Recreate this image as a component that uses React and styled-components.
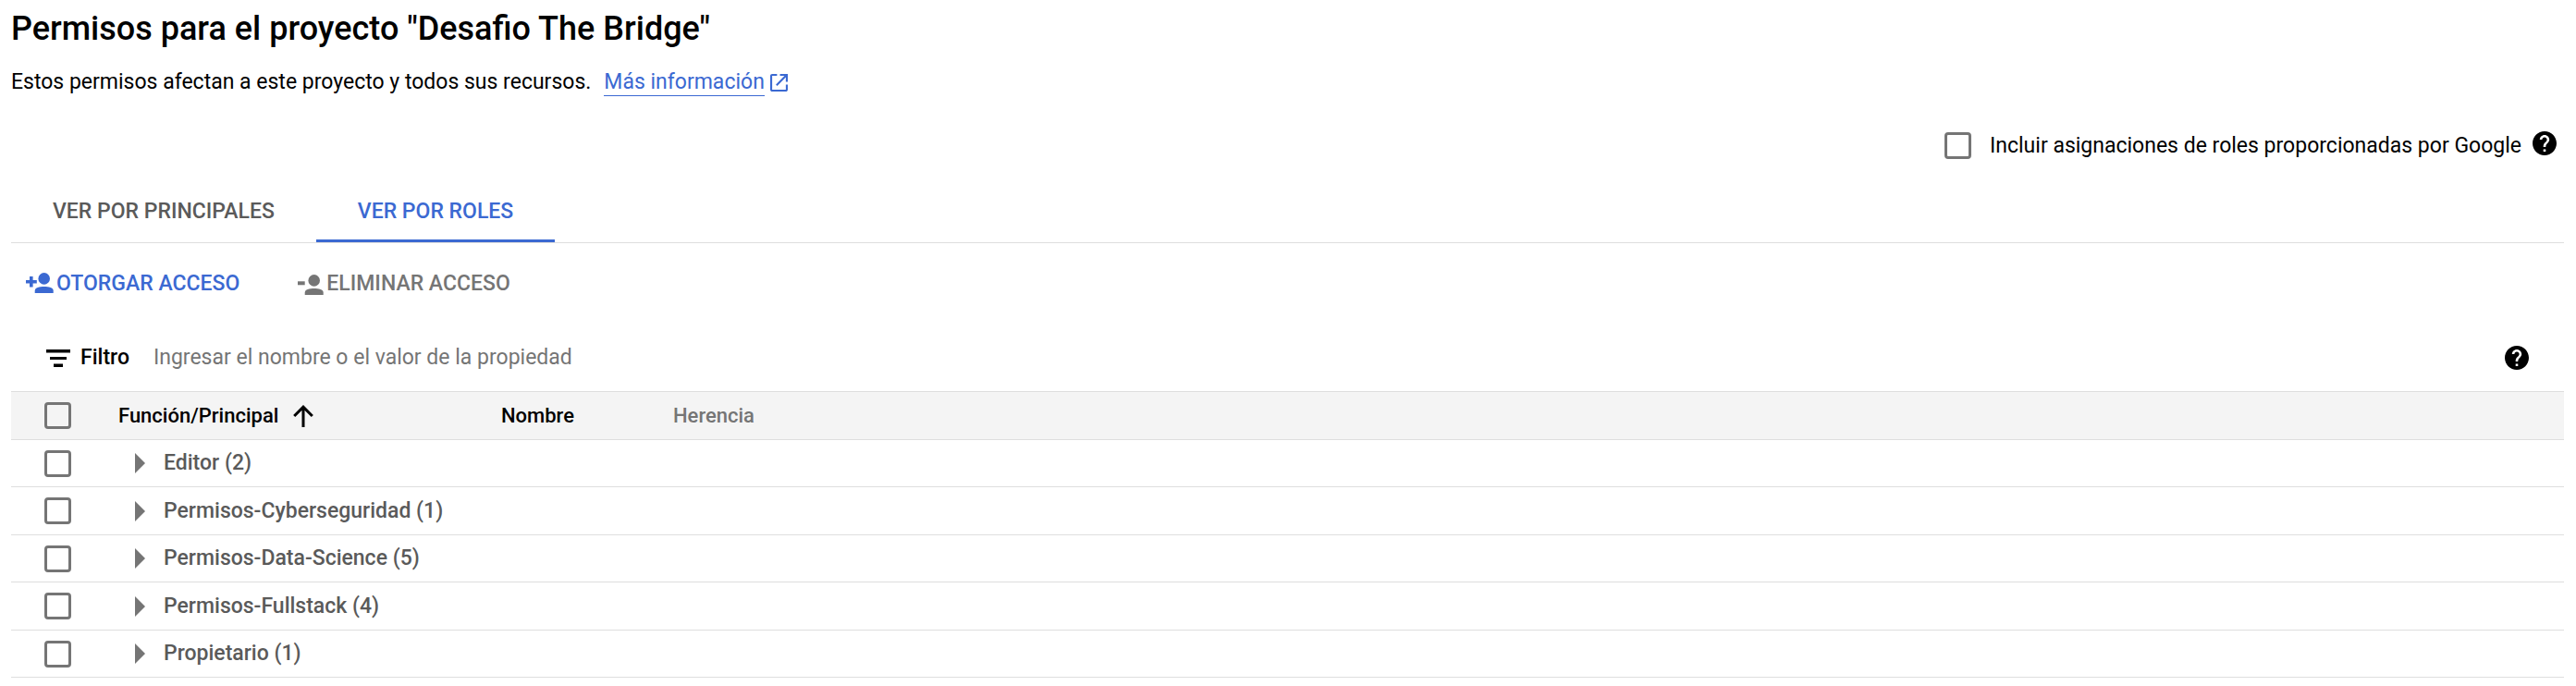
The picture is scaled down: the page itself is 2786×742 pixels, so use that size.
import React, { useState } from "react";
import styled, { createGlobalStyle, css } from "styled-components";

const color = {
  text: "#000000",
  muted: "#757575",
  strong: "#5a5a5a",
  accent: "#3b69d2",
  line: "#dedede",
  header: "#f4f4f4",
};

const GlobalStyle = createGlobalStyle`
  *, *::before, *::after { box-sizing: border-box; }
  body {
    margin: 0;
    background: #fff;
    color: ${color.text};
    font: 400 23px/28px Roboto, "Liberation Sans", sans-serif;
  }
  button, input { font: inherit; color: inherit; }
  svg { display: block; flex: none; }
`;

const Page = styled.main`
  padding: 10px 13px 9px 12px;
`;

const Title = styled.h1`
  margin: 0 0 23px;
  font-size: 36px;
  line-height: 42px;
  font-weight: 500;
`;

const Intro = styled.p`
  margin: 0;
  display: flex;
  gap: 14px;
`;

const MoreLink = styled.a`
  display: inline-flex;
  align-items: center;
  gap: 6px;
  color: ${color.accent};
  text-decoration: none;

  span {
    border-bottom: 1px solid ${color.accent};
  }
`;

const GoogleRoles = styled.div`
  display: flex;
  justify-content: flex-end;
  align-items: flex-start;
  gap: 12px;
  padding: 38px 8px 23px 0;
`;

const CheckLabel = styled.label`
  display: flex;
  align-items: center;
  gap: 20px;
  min-height: 31px;
`;

const Checkbox = styled.input.attrs({ type: "checkbox" })`
  appearance: none;
  display: block;
  flex: none;
  width: 29px;
  height: 29px;
  margin: 0;
  border: 3px solid ${color.muted};
  border-radius: 4px;
  cursor: pointer;

  &:checked {
    background: ${color.accent};
    border-color: ${color.accent};
  }
`;

const plainButton = css`
  border: 0;
  background: none;
  padding: 0;
  cursor: pointer;
`;

const HelpButton = styled.button`
  ${plainButton}
`;

const TabBar = styled.div`
  display: flex;
  border-bottom: 1px solid ${color.line};
`;

const Tab = styled.button`
  ${plainButton}
  height: 66px;
  padding: 0 45px;
  font-weight: 500;
  color: ${(p) => (p.$active ? color.accent : color.strong)};
  box-shadow: ${(p) => (p.$active ? `inset 0 -3px ${color.accent}` : "none")};
`;

const Toolbar = styled.div`
  display: flex;
  align-items: center;
  gap: 29px;
  height: 88px;
`;

const ToolButton = styled.button`
  ${plainButton}
  display: flex;
  align-items: center;
  gap: 3px;
  padding: 0 16px;
  font-weight: 500;
  color: ${color.accent};

  &:disabled {
    color: ${color.muted};
    cursor: default;
  }
`;

const FilterBar = styled.div`
  display: flex;
  align-items: center;
  height: 72px;
  padding: 0 38px;
`;

const FilterLabel = styled.label`
  display: flex;
  align-items: center;
  gap: 11px;
  font-weight: 500;
`;

const FilterInput = styled.input`
  flex: 1;
  min-width: 0;
  margin-left: 26px;
  padding: 0;
  border: 0;
  outline: 0;
  background: none;

  &::placeholder {
    color: ${color.muted};
    opacity: 1;
  }
`;

const Table = styled.table`
  width: 100%;
  table-layout: fixed;
  border-collapse: separate;
  border-spacing: 0;
  border-top: 1px solid ${color.line};
`;

const Col = styled.col`
  width: ${(p) => p.$width};
`;

const HeadCell = styled.th`
  height: 52px;
  padding: 0 0 0 12px;
  text-align: left;
  font-size: 22px;
  font-weight: 500;
  color: ${(p) => (p.$muted ? color.muted : color.text)};
  background: ${color.header};
  border-bottom: 1px solid ${color.line};
`;

const CheckHeadCell = styled(HeadCell)`
  padding-left: 36px;
`;

const SortButton = styled.button`
  ${plainButton}
  display: flex;
  align-items: center;
  gap: 16px;
`;

const Row = styled.tr`
  height: 51px;

  &:nth-child(even) {
    height: 52px;
  }
`;

const Cell = styled.td`
  padding: 0 0 0 30px;
  border-bottom: 1px solid ${color.line};
`;

const CheckCell = styled(Cell)`
  padding-left: 36px;
`;

const Expander = styled.button`
  ${plainButton}
  display: flex;
  align-items: center;
  gap: 20px;
  font-weight: 500;
  color: ${color.strong};
`;

const Triangle = () => (
  <svg width="11" height="22" viewBox="0 0 11 22" fill={color.muted} aria-hidden="true">
    <path d="M0 0l11 11L0 22z" />
  </svg>
);

const HelpIcon = () => (
  <svg width="26" height="26" viewBox="2 2 20 20" fill="currentColor" aria-hidden="true">
    <path d="M12 2C6.48 2 2 6.48 2 12s4.48 10 10 10 10-4.48 10-10S17.52 2 12 2zm1 17h-2v-2h2v2zm2.07-7.75l-.9.92C13.45 12.9 13 13.5 13 15h-2v-.5c0-1.1.45-2.1 1.17-2.83l1.24-1.26c.37-.36.59-.86.59-1.41 0-1.1-.9-2-2-2s-2 .9-2 2H8c0-2.21 1.79-4 4-4s4 1.79 4 4c0 .88-.36 1.68-.93 2.25z" />
  </svg>
);

const OpenIcon = () => (
  <svg width="19" height="19" viewBox="3 3 18 18" fill="currentColor" aria-hidden="true">
    <path d="M19 19H5V5h5V3H5c-1.11 0-2 .9-2 2v14c0 1.1.89 2 2 2h14c1.1 0 2-.9 2-2v-5h-2v5zM13 3v2h4.590l-8.830 8.830 1.410 1.410L19 6.410V11h2V3h-8z" />
  </svg>
);

const PersonIcon = ({ add }) => (
  <svg width="30" height="24" viewBox="0 0 30 24" fill="currentColor" aria-hidden="true">
    {add ? (
      <path d="M0 8h4V4h3.600v4h4.200v3.500H7.600v4H4v-4H0z" />
    ) : (
      <path d="M2 9.300h7.700v4H2z" />
    )}
    <g transform={add ? undefined : "translate(0 2)"}>
      <circle cx="19.700" cy="6.400" r="6.300" />
      <path d="M9.700 22v-2.500c0-3.500 5-4.500 10-4.500s10 1 10 4.500V22z" />
    </g>
  </svg>
);

const FilterIcon = () => (
  <svg width="26" height="19" viewBox="0 0 26 19" fill="currentColor" aria-hidden="true">
    <path d="M0 0h26v3.500H0zM4 8h18v3H4zM8 15.500h10V19H8z" />
  </svg>
);

const ArrowUpIcon = () => (
  <svg width="22" height="24" viewBox="0 0 22 24" fill="none" stroke="currentColor" strokeWidth="3" aria-hidden="true">
    <path d="M11 24V2.500M1.200 12L11 2.200 20.800 12" />
  </svg>
);

const roles = [
  { name: "Editor", count: 2 },
  { name: "Permisos-Cyberseguridad", count: 1 },
  { name: "Permisos-Data-Science", count: 5 },
  { name: "Permisos-Fullstack", count: 4 },
  { name: "Propietario", count: 1 },
];

const tabs = ["VER POR PRINCIPALES", "VER POR ROLES"];

export default function App() {
  const [active, setActive] = useState(1);

  return (
    <Page>
      <GlobalStyle />
      <Title>Permisos para el proyecto "Desafio The Bridge"</Title>
      <Intro>
        Estos permisos afectan a este proyecto y todos sus recursos.
        <MoreLink href="#info">
          <span>Más información</span>
          <OpenIcon />
        </MoreLink>
      </Intro>

      <GoogleRoles>
        <CheckLabel>
          <Checkbox />
          Incluir asignaciones de roles proporcionadas por Google
        </CheckLabel>
        <HelpButton aria-label="Ayuda">
          <HelpIcon />
        </HelpButton>
      </GoogleRoles>

      <TabBar role="tablist">
        {tabs.map((label, i) => (
          <Tab
            key={label}
            role="tab"
            aria-selected={i === active}
            $active={i === active}
            onClick={() => setActive(i)}
          >
            {label}
          </Tab>
        ))}
      </TabBar>

      <Toolbar>
        <ToolButton>
          <PersonIcon add />
          OTORGAR ACCESO
        </ToolButton>
        <ToolButton disabled>
          <PersonIcon />
          ELIMINAR ACCESO
        </ToolButton>
      </Toolbar>

      <FilterBar>
        <FilterLabel htmlFor="filter">
          <FilterIcon />
          Filtro
        </FilterLabel>
        <FilterInput id="filter" placeholder="Ingresar el nombre o el valor de la propiedad" />
        <HelpButton aria-label="Ayuda sobre filtros">
          <HelpIcon />
        </HelpButton>
      </FilterBar>

      <Table>
        <colgroup>
          <Col $width="104px" />
          <Col $width="414px" />
          <Col $width="186px" />
          <Col $width="auto" />
        </colgroup>
        <thead>
          <tr>
            <CheckHeadCell>
              <Checkbox aria-label="Seleccionar todo" />
            </CheckHeadCell>
            <HeadCell aria-sort="ascending">
              <SortButton>
                Función/Principal
                <ArrowUpIcon />
              </SortButton>
            </HeadCell>
            <HeadCell>Nombre</HeadCell>
            <HeadCell $muted>Herencia</HeadCell>
          </tr>
        </thead>
        <tbody>
          {roles.map(({ name, count }) => (
            <Row key={name}>
              <CheckCell>
                <Checkbox aria-label={`Seleccionar ${name}`} />
              </CheckCell>
              <Cell colSpan={3}>
                <Expander aria-expanded="false">
                  <Triangle />
                  {name} ({count})
                </Expander>
              </Cell>
            </Row>
          ))}
        </tbody>
      </Table>
    </Page>
  );
}
